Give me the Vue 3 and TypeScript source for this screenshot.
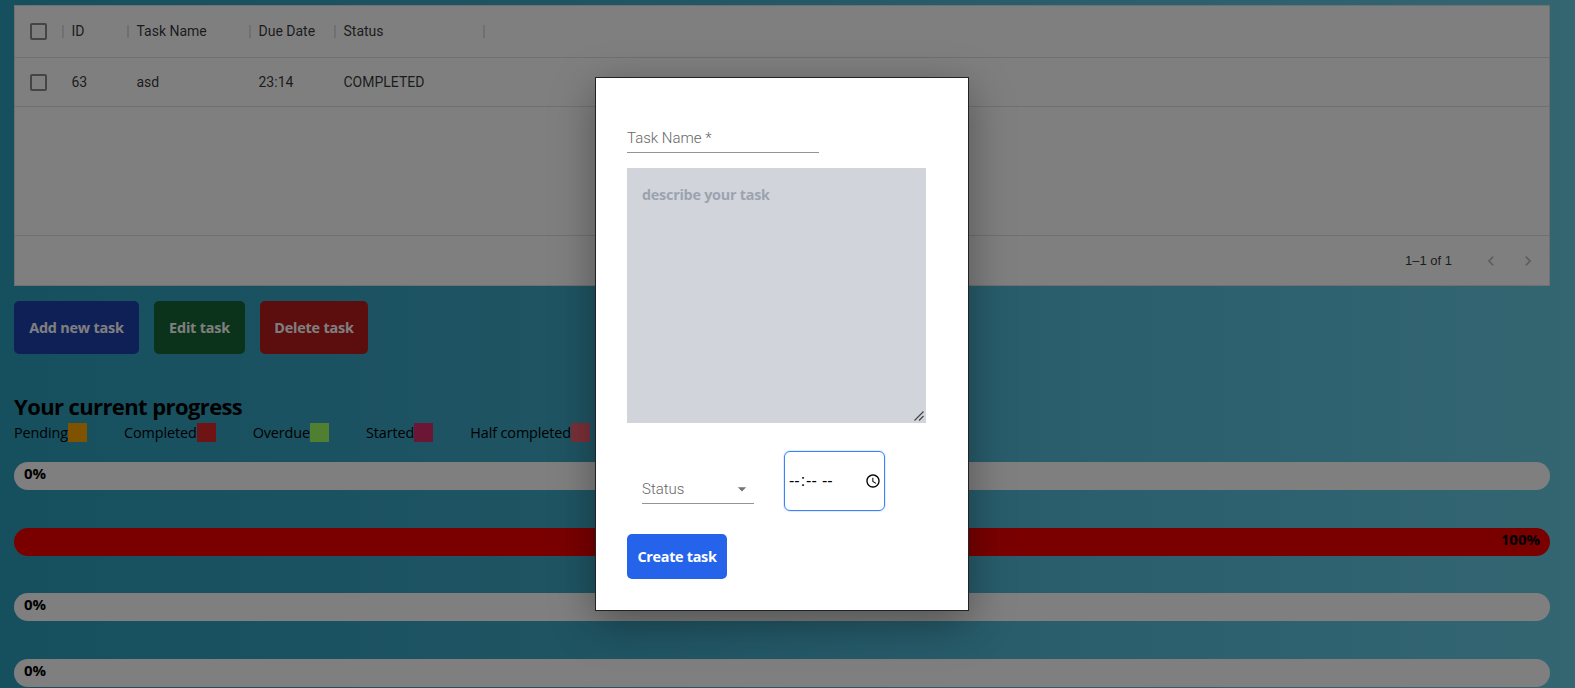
<script setup lang="ts">
const columns = [
  { label: 'ID', width: 65 },
  { label: 'Task Name', width: 122 },
  { label: 'Due Date', width: 85 },
  { label: 'Status', width: 149 },
]

const rows = [{ id: 63, name: 'asd', due: '23:14', status: 'COMPLETED' }]

const legend = [
  { label: 'Pending', color: '#ffa500' },
  { label: 'Completed', color: '#de2828' },
  { label: 'Overdue', color: '#a2ff64' },
  { label: 'Started', color: '#d62c6a' },
  { label: 'Half completed', color: '#f46070' },
]

const bars = [
  { value: 0, color: '#f40000' },
  { value: 100, color: '#f40000' },
  { value: 0, color: '#f40000' },
  { value: 0, color: '#f40000' },
]
</script>

<template>
  <div class="page">
    <section class="table">
      <div class="row head">
        <span class="check"></span>
        <div v-for="c in columns" :key="c.label" class="head-cell" :style="{ width: c.width + 'px' }">
          <i class="sep"></i>
          <span>{{ c.label }}</span>
        </div>
        <i class="sep"></i>
      </div>
      <div v-for="r in rows" :key="r.id" class="row body-row">
        <span class="check"></span>
        <span class="cell" :style="{ width: columns[0].width + 'px' }">{{ r.id }}</span>
        <span class="cell" :style="{ width: columns[1].width + 'px' }">{{ r.name }}</span>
        <span class="cell" :style="{ width: columns[2].width + 'px' }">{{ r.due }}</span>
        <span class="cell">{{ r.status }}</span>
      </div>
      <div class="empty"></div>
      <footer class="foot">
        <span class="count">1–1 of 1</span>
        <svg class="chev" viewBox="0 0 24 24"><path d="M15.41 7.41 14 6l-6 6 6 6 1.41-1.41L10.83 12z" /></svg>
        <svg class="chev" viewBox="0 0 24 24"><path d="M10 6 8.59 7.41 13.17 12l-4.58 4.59L10 18l6-6z" /></svg>
      </footer>
    </section>

    <div class="actions">
      <button class="btn blue">Add new task</button>
      <button class="btn green">Edit task</button>
      <button class="btn red">Delete task</button>
    </div>

    <h2 class="title">Your current progress</h2>
    <div class="legend">
      <div v-for="l in legend" :key="l.label" class="legend-item">
        <span>{{ l.label }}</span>
        <i class="swatch" :style="{ background: l.color }"></i>
      </div>
    </div>

    <div class="bars">
      <div v-for="(b, i) in bars" :key="i" class="bar">
        <div class="fill" :style="{ width: b.value + '%', background: b.color }"></div>
        <span class="pct" :class="{ full: b.value === 100 }">{{ b.value }}%</span>
      </div>
    </div>

    <div class="overlay"></div>

    <form class="modal" @submit.prevent>
      <div class="field name-field">Task Name *</div>
      <div class="desc-wrap">
        <textarea class="desc" placeholder="describe your task"></textarea>
        <svg class="grip" viewBox="0 0 10 10"><path d="M0.5 9.5 9.5 0.5M5 9.5 9.5 5" /></svg>
      </div>
      <div class="controls">
        <div class="field status-field">
          <span>Status</span>
          <svg class="caret" viewBox="0 0 24 24"><path d="M7 10l5 5 5-5z" /></svg>
        </div>
        <input class="time" type="time" />
      </div>
      <button class="create">Create task</button>
    </form>
  </div>
</template>

<style>
html,
body {
  margin: 0;
  overflow: hidden;
}
</style>

<style scoped>
.page {
  position: relative;
  width: 1575px;
  height: 688px;
  box-sizing: border-box;
  padding: 5px 25px 0 14px;
  overflow: hidden;
  background: linear-gradient(90deg, #2ca0be 0%, #3ea8c6 35%, #56bedc 70%, #68cce4 100%);
  font-family: "Open Sans", "Noto Sans", sans-serif;
  color: #000;
}

.table {
  display: flex;
  flex-direction: column;
  height: 281px;
  box-sizing: border-box;
  border: 1px solid #e0e0e0;
  background: #fff;
  font-family: Roboto, sans-serif;
  font-size: 14px;
  color: rgba(0, 0, 0, 0.8);
}

.row {
  display: flex;
  align-items: center;
  flex: none;
  border-bottom: 1px solid #e0e0e0;
}

.head {
  height: 51px;
}

.body-row {
  height: 48px;
}

.check {
  flex: none;
  width: 13px;
  height: 13px;
  margin: 0 15px;
  border: 2px solid #8a8a8a;
  border-radius: 2px;
}

.head-cell {
  display: flex;
  align-items: center;
  flex: none;
  gap: 7.5px;
}

.head-cell span {
  margin-top: -2px;
}

.sep {
  flex: none;
  width: 2px;
  height: 13px;
  background: #e0e0e0;
}

.cell {
  flex: none;
  box-sizing: border-box;
  margin-top: -1px;
  padding-left: 9.5px;
}

.empty {
  flex: 1;
  border-bottom: 1px solid #e0e0e0;
}

.foot {
  display: flex;
  align-items: center;
  justify-content: flex-end;
  flex: none;
  height: 49px;
  padding-right: 11px;
}

.count {
  margin-right: 12px;
  font-family: "Liberation Sans", sans-serif;
  font-size: 13px;
}

.chev {
  width: 20px;
  height: 20px;
  margin-left: 17px;
  fill: rgba(0, 0, 0, 0.26);
}

.actions {
  display: flex;
  gap: 15px;
  margin-top: 15px;
}

.btn {
  height: 53px;
  padding: 0;
  border: 0;
  border-radius: 5px;
  font: 700 14.4px "Open Sans", sans-serif;
  letter-spacing: -0.2px;
  color: #fff;
}

.blue {
  width: 125px;
  background: #1e40af;
}

.green {
  width: 91px;
  background: #166534;
}

.red {
  width: 108px;
  background: #b91c1c;
}

.title {
  margin: 39px 0 0;
  font-size: 22px;
  font-weight: 700;
  letter-spacing: -0.6px;
  line-height: 26px;
}

.legend {
  display: flex;
  gap: 37px;
  height: 19px;
  margin-top: 4px;
  font-size: 14.4px;
  letter-spacing: -0.1px;
  line-height: 19px;
}

.legend-item {
  display: flex;
}

.swatch {
  width: 19px;
  height: 19px;
}

.bars {
  display: flex;
  flex-direction: column;
  gap: 37.7px;
  margin-top: 20px;
}

.bar {
  position: relative;
  height: 28px;
  overflow: hidden;
  border-radius: 14px;
  background: #fff;
}

.fill {
  height: 100%;
}

.pct {
  position: absolute;
  top: 1px;
  left: 10px;
  font-size: 15px;
  font-weight: 700;
  line-height: 20px;
}

.pct.full {
  left: auto;
  right: 10px;
}

.overlay {
  position: absolute;
  inset: 0;
  background: rgba(0, 0, 0, 0.5);
}

.modal {
  position: absolute;
  top: 77px;
  left: 595px;
  display: flex;
  flex-direction: column;
  align-items: flex-start;
  width: 374px;
  height: 534px;
  box-sizing: border-box;
  padding: 46px 31px 0;
  border: 1px solid #222;
  background: #fff;
  box-shadow: 0 12px 40px rgba(0, 0, 0, 0.35);
}

.field {
  box-sizing: border-box;
  border-bottom: 1px solid #949494;
  font-family: Roboto, sans-serif;
  font-size: 15px;
  font-weight: 300;
  color: #666;
}

.name-field {
  width: 192px;
  height: 29px;
  padding-top: 5px;
}

.desc-wrap {
  position: relative;
  margin-top: 15px;
}

.desc {
  display: block;
  width: 299px;
  height: 255px;
  box-sizing: border-box;
  padding: 17px 15px;
  border: 0;
  border-radius: 0;
  outline: 0;
  resize: none;
  background: #d1d5db;
  font: 700 14.4px "Open Sans", sans-serif;
  letter-spacing: -0.25px;
}

.desc::placeholder {
  color: #9ca3af;
}

.grip {
  position: absolute;
  right: 2px;
  bottom: 2px;
  width: 10px;
  height: 10px;
  fill: none;
  stroke: #444;
  stroke-width: 1.2;
}

.controls {
  display: flex;
  align-items: flex-start;
  gap: 30px;
  margin: 28px 0 0 15px;
}

.status-field {
  display: flex;
  align-items: center;
  justify-content: space-between;
  width: 112px;
  height: 30px;
  margin-top: 23px;
}

.caret {
  width: 20px;
  height: 20px;
  margin-right: 2px;
  fill: #757575;
}

.time {
  width: 101px;
  height: 60px;
  box-sizing: border-box;
  padding: 0 0 0 3px;
  border: 1px solid #3b82f6;
  border-radius: 6px;
  outline: 0;
  box-shadow: 0 0 0 1px rgba(59, 130, 246, 0.15);
  background: #fff;
  font: 16px "Liberation Sans", sans-serif;
  letter-spacing: 0.3px;
}

.time::-webkit-calendar-picker-indicator {
  margin-right: -1px;
}

.create {
  width: 100px;
  height: 45px;
  margin-top: 23px;
  padding: 0;
  border: 0;
  border-radius: 5px;
  background: #2563eb;
  font: 700 14.4px "Open Sans", sans-serif;
  letter-spacing: -0.3px;
  color: #fff;
}
</style>
